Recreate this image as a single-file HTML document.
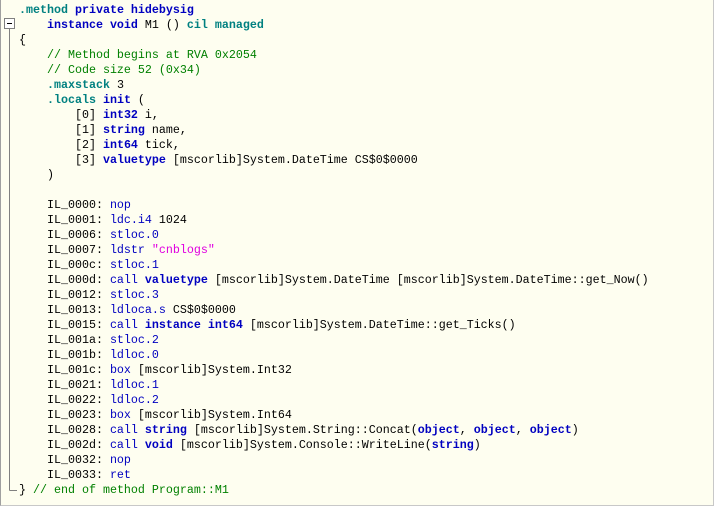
<!DOCTYPE html><html><head><style>
body{margin:0;background:#fff;}
#w{position:relative;width:712px;height:505px;background:#fefef0;border-left:1px solid #a0a0a0;border-bottom:1px solid #c8c8c8;border-right:1px solid #c8c8c8;overflow:hidden}
pre{position:absolute;left:18px;top:3px;margin:0;font:11.67px/15px "Liberation Mono",monospace;color:#000}
.k{color:#0000c0;font-weight:bold}.o{color:#0000c0}.t{color:#008080;font-weight:bold}.c{color:#008000}.s{color:#e000e0}
</style></head><body><div id="w">
<svg style="position:absolute;left:0;top:0" width="20" height="500"><rect x="3.5" y="18.5" width="10" height="10" fill="#fff" stroke="#808080"/><line x1="6" y1="23.5" x2="11" y2="23.5" stroke="#000"/><line x1="8.5" y1="29" x2="8.5" y2="490.5" stroke="#808080"/><line x1="8.5" y1="490.5" x2="16" y2="490.5" stroke="#808080"/></svg>
<pre><span class="t">.method</span> <span class="k">private hidebysig</span>
    <span class="k">instance void</span> M1 () <span class="t">cil managed</span>
{
    <span class="c">// Method begins at RVA 0x2054</span>
    <span class="c">// Code size 52 (0x34)</span>
    <span class="t">.maxstack</span> 3
    <span class="t">.locals</span> <span class="k">init</span> (
        [0] <span class="k">int32</span> i,
        [1] <span class="k">string</span> name,
        [2] <span class="k">int64</span> tick,
        [3] <span class="k">valuetype</span> [mscorlib]System.DateTime CS$0$0000
    )

    IL_0000: <span class="o">nop</span>
    IL_0001: <span class="o">ldc.i4</span> 1024
    IL_0006: <span class="o">stloc.0</span>
    IL_0007: <span class="o">ldstr</span> <span class="s">"cnblogs"</span>
    IL_000c: <span class="o">stloc.1</span>
    IL_000d: <span class="o">call</span> <span class="k">valuetype</span> [mscorlib]System.DateTime [mscorlib]System.DateTime::get_Now()
    IL_0012: <span class="o">stloc.3</span>
    IL_0013: <span class="o">ldloca.s</span> CS$0$0000
    IL_0015: <span class="o">call</span> <span class="k">instance int64</span> [mscorlib]System.DateTime::get_Ticks()
    IL_001a: <span class="o">stloc.2</span>
    IL_001b: <span class="o">ldloc.0</span>
    IL_001c: <span class="o">box</span> [mscorlib]System.Int32
    IL_0021: <span class="o">ldloc.1</span>
    IL_0022: <span class="o">ldloc.2</span>
    IL_0023: <span class="o">box</span> [mscorlib]System.Int64
    IL_0028: <span class="o">call</span> <span class="k">string</span> [mscorlib]System.String::Concat(<span class="k">object</span>, <span class="k">object</span>, <span class="k">object</span>)
    IL_002d: <span class="o">call</span> <span class="k">void</span> [mscorlib]System.Console::WriteLine(<span class="k">string</span>)
    IL_0032: <span class="o">nop</span>
    IL_0033: <span class="o">ret</span>
} <span class="c">// end of method Program::M1</span></pre>
</div></body></html>
